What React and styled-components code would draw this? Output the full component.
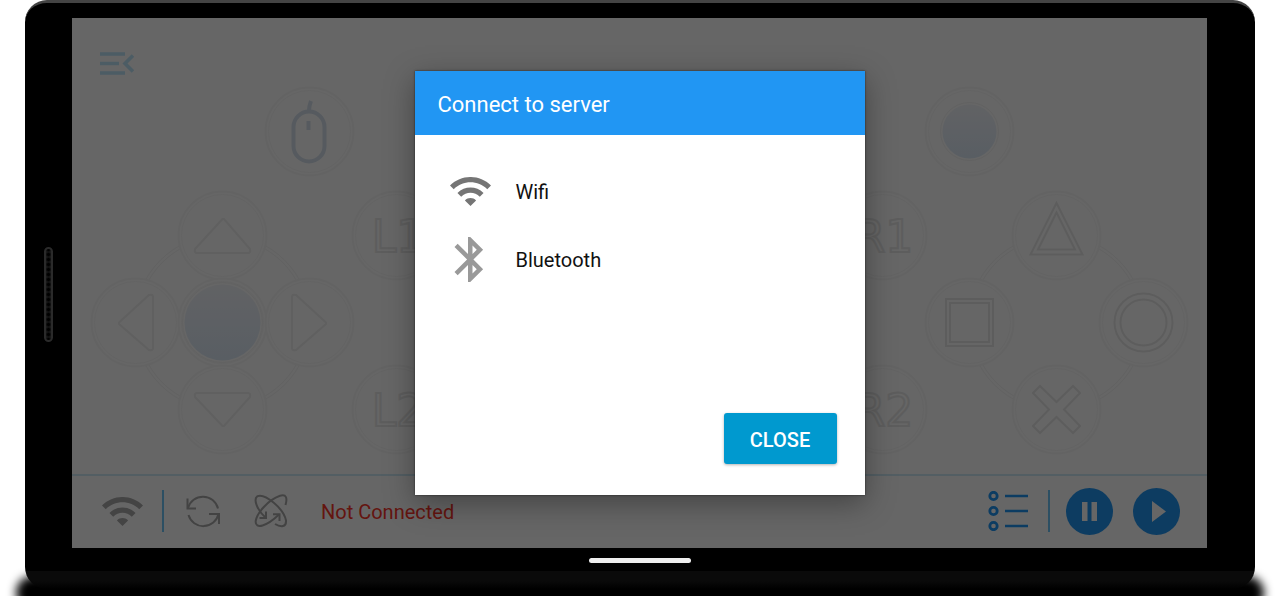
import React from "react";
import styled, { createGlobalStyle } from "styled-components";

const App = () => {
  return (
    <>
      <GlobalStyle />
      <Page>
        <Device>
          <Body>
            <Bezel>
              <SpeakerSlot>
                <Speaker />
              </SpeakerSlot>
              <Screen>
                <Gamepad />
                <StatusBar />
                <Scrim>
                  <ConnectDialog />
                </Scrim>
              </Screen>
            </Bezel>
            <NavBar>
              <HomeIndicator />
            </NavBar>
          </Body>
        </Device>
      </Page>
    </>
  );
};

export default App;

// ======== Gamepad ========

const PadButton = ({ col, row, label, children }) => (
  <Pad type="button" aria-label={label} $col={col} $row={row}>
    <Drawing viewBox="0 0 87 87">
      <circle cx="43.5" cy="43.5" r="44" fill="#fff" stroke="#f8f8f8" strokeWidth="2" />
      <circle cx="43.5" cy="43.5" r="41" fill="none" stroke="#f8f8f8" />
      {children}
    </Drawing>
  </Pad>
);

const PadRing = () => (
  <Ring viewBox="0 0 261 261" aria-hidden="true">
    <circle cx="130.5" cy="130.5" r="88" />
    <circle cx="130.5" cy="130.5" r="85" />
  </Ring>
);

const BlueBall = ({ id, r }) => (
  <>
    <defs>
      <linearGradient id={id} x1="0" y1="0" x2="0" y2="1">
        <stop offset="0" stopColor="#f3f5fa" />
        <stop offset="1" stopColor="#deebf8" />
      </linearGradient>
    </defs>
    <circle cx="43.5" cy="43.5" r={r + 2} fill="#fff" stroke="#f4f4f4" />
    <circle cx="43.5" cy="43.5" r={r} fill={`url(#${id})`} />
  </>
);

const Arrow = ({ d }) => <path d={d} fill="none" stroke="#f0f0f0" strokeWidth="2" />;

const Glyph = ({ children }) => (
  <g fill="none" stroke="#e9e9e9" strokeWidth="2">
    {children}
  </g>
);

const Shoulder = ({ text }) => (
  <text x="45" y="60" textAnchor="middle">
    {text}
  </text>
);

const Gamepad = () => (
  <PadArea>
    <MenuButton type="button" aria-label="Collapse menu">
      <svg width="34" height="24" viewBox="0 0 34 24" fill="none" stroke="#bfe6fb" strokeWidth="3.600">
        <path d="M0 2h25M0 11.500h19M0 21h25M33 3.500l-8 8 8 8" />
      </svg>
    </MenuButton>
    <Clusters>
      <Cluster>
        <PadRing />
        <PadButton col={3} row={1} label="Mouse">
          <g fill="none" stroke="#d6e2ee" strokeWidth="4">
            <rect x="27.500" y="23.500" width="31" height="50" rx="15.500" />
            <path d="M43 23q0-5 2-10M42.500 33v9" />
          </g>
        </PadButton>
        <PadButton col={2} row={2} label="Up">
          <Arrow d="M43.500 27 16 57q-1 4 2 4h51q3 0 2-4L45 27z" />
        </PadButton>
        <PadButton col={4} row={2} label="L1">
          <Shoulder text="L1" />
        </PadButton>
        <PadButton col={1} row={3} label="Left">
          <Arrow d="M27 43.500 57 16q4-1 4 2v51q0 3-4 2L27 45z" />
        </PadButton>
        <PadButton col={2} row={3} label="Centre">
          <BlueBall id="stickLeft" r={38} />
        </PadButton>
        <PadButton col={3} row={3} label="Right">
          <Arrow d="M60 43.500 30 16q-4-1-4 2v51q0 3 4 2L60 45z" />
        </PadButton>
        <PadButton col={2} row={4} label="Down">
          <Arrow d="M43.500 60 16 31q-1-4 2-4h51q3 0 2 4L45 60z" />
        </PadButton>
        <PadButton col={4} row={4} label="L2">
          <Shoulder text="L2" />
        </PadButton>
      </Cluster>
      <Cluster $right>
        <PadRing />
        <PadButton col={2} row={1} label="Stick">
          <BlueBall id="stickRight" r={27} />
        </PadButton>
        <PadButton col={1} row={2} label="R1">
          <Shoulder text="R1" />
        </PadButton>
        <PadButton col={3} row={2} label="Triangle">
          <Glyph>
            <path d="M43.500 11 17.500 62.500h52zM43.500 20.500 25 57.500h37z" />
          </Glyph>
        </PadButton>
        <PadButton col={2} row={3} label="Square">
          <Glyph>
            <path d="M20 20h47v47H20zM24 24h39v39H24z" />
          </Glyph>
        </PadButton>
        <PadButton col={4} row={3} label="Circle">
          <Glyph>
            <circle cx="43.500" cy="43.500" r="29" />
            <circle cx="43.500" cy="43.500" r="23" />
          </Glyph>
        </PadButton>
        <PadButton col={1} row={4} label="R2">
          <Shoulder text="R2" />
        </PadButton>
        <PadButton col={3} row={4} label="Cross">
          <Glyph>
            <path d="M27 20l16.500 16L60 20l7 7-16 16.500L67 60l-7 7-16.500-16L27 67l-7-7 16-16.500L20 27z" />
          </Glyph>
        </PadButton>
      </Cluster>
    </Clusters>
  </PadArea>
);

// ======== Status bar ========

const WifiIcon = ({ color }) => (
  <svg width="41" height="29" viewBox="1 4.450 22 15.560" fill={color} aria-hidden="true">
    <path d="M1 9l2 2c4.970-4.970 13.030-4.970 18 0l2-2C16.930 2.930 7.080 2.930 1 9zm8 8l3 3 3-3c-1.650-1.660-4.340-1.660-6 0zm-4-4l2 2c2.760-2.760 7.240-2.760 10 0l2-2C15.140 9.140 8.870 9.140 5 13z" />
  </svg>
);

const RotateIcon = () => (
  <svg width="36" height="36" viewBox="0 0 36 36" fill="none" stroke="#a8a8a8" strokeWidth="2" aria-hidden="true">
    <path d="M2 15A15.500 15.500 0 0 1 32 15.500M2.500 22A15.500 15.500 0 0 0 32.500 21" />
    <path d="M1.500 5.500v10H10M23 21h10v10" />
  </svg>
);

const GyroIcon = () => (
  <svg width="34" height="34" viewBox="0 0 34 34" fill="none" stroke="#a8a8a8" strokeWidth="2" aria-hidden="true">
    <path d="M31.500 11C33.500 4 32.500 0 26 1.800C14 6 3 19 1.700 27C1 36 13 32 25 20.500" />
    <path d="M11.500 23.500C3 16-1 5 3.500 2.200C11-1 30 15 32 26.500C32.500 33 27 33.500 21 30" />
    <path d="M5.500 24H12v-6.500M19 20.300h6.500V27" />
  </svg>
);

const ListIcon = () => (
  <svg width="40" height="40" viewBox="0 0 40 40" fill="none" stroke="#1e96f5" strokeWidth="2.800" aria-hidden="true">
    <circle cx="5.500" cy="5" r="3.700" />
    <circle cx="5.500" cy="20" r="3.700" />
    <circle cx="5.500" cy="35" r="3.700" />
    <path d="M17 5h23M17 20h23M17 35h23" strokeWidth="2.400" />
  </svg>
);

const PauseIcon = () => (
  <svg width="47" height="47" viewBox="0 0 47 47" aria-hidden="true">
    <circle cx="23.500" cy="23.500" r="23.500" fill="#2196f3" />
    <path d="M16 14h5.500v19H16zM25.500 14H31v19h-5.500z" fill="#fff" />
  </svg>
);

const PlayIcon = () => (
  <svg width="47" height="47" viewBox="0 0 47 47" aria-hidden="true">
    <circle cx="23.500" cy="23.500" r="23.500" fill="#2196f3" />
    <path d="M19 13v21l14-10.500z" fill="#fff" />
  </svg>
);

const StatusBar = () => (
  <Bar>
    <BarGroup $gap={19} $after={22}>
      <IconButton type="button" aria-label="Wifi">
        <WifiIcon color="#aaa" />
      </IconButton>
      <Divider />
    </BarGroup>
    <BarGroup $gap={32} $after={33}>
      <IconButton type="button" aria-label="Rotate">
        <RotateIcon />
      </IconButton>
      <IconButton type="button" aria-label="Gyroscope">
        <GyroIcon />
      </IconButton>
    </BarGroup>
    <Status>Not Connected</Status>
    <BarGroup $gap={20} $after={16} $end>
      <IconButton type="button" aria-label="List">
        <ListIcon />
      </IconButton>
      <Divider />
    </BarGroup>
    <BarGroup $gap={20}>
      <IconButton type="button" aria-label="Pause">
        <PauseIcon />
      </IconButton>
      <IconButton type="button" aria-label="Play">
        <PlayIcon />
      </IconButton>
    </BarGroup>
  </Bar>
);

// ======== Dialog ========

const BluetoothIcon = () => (
  <svg width="41" height="45" viewBox="3 2 18.220 20" fill="#999" aria-hidden="true">
    <path d="M17.710 7.710L12 2h-1v7.590L6.410 5 5 6.410 10.590 12 5 17.590 6.410 19 11 14.410V22h1l5.710-5.710-4.300-4.290 4.300-4.290zM13 5.830l1.880 1.880L13 9.590V5.830zm1.880 10.460L13 18.170v-3.760l1.880 1.880z" />
  </svg>
);

const ConnectDialog = () => (
  <Dialog role="dialog" aria-labelledby="dialog-title">
    <Title id="dialog-title">Connect to server</Title>
    <Options>
      <Option type="button">
        <WifiIcon color="#757575" />
        <OptionLabel>Wifi</OptionLabel>
      </Option>
      <Option type="button">
        <BluetoothIcon />
        <OptionLabel>Bluetooth</OptionLabel>
      </Option>
    </Options>
    <Actions>
      <CloseButton type="button">CLOSE</CloseButton>
    </Actions>
  </Dialog>
);

// ======== Styled Components ========

const GlobalStyle = createGlobalStyle`
  * {
    box-sizing: border-box;
  }

  body {
    margin: 0;
    background: #fff;
    font-family: Roboto, "Liberation Sans", sans-serif;
  }

  button {
    border: 0;
    padding: 0;
    background: none;
    font: inherit;
    color: inherit;
    cursor: pointer;
  }

  svg {
    display: block;
  }
`;

const Page = styled.div`
  padding: 0 25px 5px;
  overflow: hidden;
`;

const Device = styled.main`
  position: relative;
  z-index: 0;
  padding-bottom: 7px;
  clip-path: inset(0 -25px 0 -25px);

  /* ground shadow that spreads out under the lower corners */
  &::before {
    content: "";
    position: absolute;
    z-index: -1;
    left: -9px;
    right: -9px;
    bottom: -14px;
    height: 34px;
    border-radius: 20px;
    background: #000;
    filter: blur(5px);
  }
`;

const Body = styled.div`
  padding-bottom: 18px;
  border-top: 3px solid #444;
  border-radius: 22px;
  background: linear-gradient(#000 568px, #0a0a0a 568px, #0a0a0a 578px, #000);
`;

const Bezel = styled.div`
  display: grid;
  grid-template-columns: 47px 1fr 48px;
  padding-top: 15px;
`;

const SpeakerSlot = styled.div`
  display: flex;
  align-items: center;
  justify-content: center;
  padding-top: 22px;
`;

const Speaker = styled.div`
  width: 9px;
  height: 95px;
  border: 2px solid #2a2a2a;
  border-radius: 5px;
  background: radial-gradient(#000 1px, #1c1c1c 3px) center / 5px 5px;
`;

const Screen = styled.section`
  position: relative;
  display: flex;
  flex-direction: column;
  height: 530px;
  background: #fff;
`;

const NavBar = styled.div`
  display: flex;
  justify-content: center;
  padding-top: 10px;
  height: 23px;
`;

const HomeIndicator = styled.div`
  width: 102px;
  height: 5px;
  border-radius: 3px;
  background: #eee;
`;

const PadArea = styled.div`
  flex: 1;
  padding: 34px 20px 0;
`;

const MenuButton = styled.button`
  display: block;
  margin-left: 8px;
  height: 36px;

  svg {
    margin-bottom: 12px;
  }
`;

const Clusters = styled.div`
  display: flex;
  justify-content: space-between;
`;

const Cluster = styled.div`
  display: grid;
  grid-template-columns: repeat(4, 87px);
  grid-template-rows: 104px repeat(3, 87px);

  > svg {
    grid-column: ${({ $right }) => ($right ? "2 / 5" : "1 / 4")};
  }
`;

const Ring = styled.svg`
  grid-row: 2 / 5;
  width: 261px;
  height: 261px;
  fill: none;
  stroke: #f4f4f4;
`;

const Pad = styled.button`
  grid-column: ${({ $col }) => $col};
  grid-row: ${({ $row }) => $row};
  width: 87px;
  height: 87px;
`;

const Drawing = styled.svg`
  width: 87px;
  height: 87px;
  overflow: visible;

  text {
    fill: #fff;
    stroke: #e9e9e9;
    stroke-width: 2;
    font: 44px "DejaVu Sans", sans-serif;
  }
`;

const Bar = styled.footer`
  display: flex;
  align-items: center;
  height: 74px;
  padding: 0 27px 2px 30px;
  border-top: 2px solid #d0eaf8;
`;

const BarGroup = styled.div`
  display: flex;
  align-items: center;
  gap: ${({ $gap }) => $gap}px;
  margin-left: ${({ $end }) => ($end ? "auto" : "0")};
  margin-right: ${({ $after = 0 }) => $after}px;
`;

const IconButton = styled.button`
  flex: none;
`;

const Divider = styled.div`
  width: 2px;
  height: 42px;
  background: #6fc6f8;
`;

const Status = styled.span`
  padding-top: 2px;
  font-size: 20px;
  line-height: 24px;
  color: #f9362a;
`;

const Scrim = styled.div`
  position: absolute;
  inset: 0;
  display: flex;
  align-items: center;
  justify-content: center;
  background: rgba(0, 0, 0, 0.6);
`;

const Dialog = styled.div`
  display: flex;
  flex-direction: column;
  width: 450px;
  height: 424px;
  background: #fff;
  box-shadow:
    0 0 2px rgba(0, 0, 0, 0.6),
    0 8px 28px rgba(0, 0, 0, 0.35);
`;

const Title = styled.h1`
  margin: 0;
  padding: 4px 23px 0;
  background: #2196f3;
  color: #fff;
  font-size: 22px;
  font-weight: 400;
  line-height: 60px;
`;

const Options = styled.div`
  display: flex;
  flex: 1;
  flex-direction: column;
  padding: 22px 35px;
`;

const Option = styled.button`
  display: flex;
  align-items: center;
  gap: 25px;
  height: 68px;
  color: #111;
  font-size: 20px;
  text-align: left;
`;

const OptionLabel = styled.span`
  padding-top: 2px;
`;

const Actions = styled.div`
  display: flex;
  justify-content: flex-end;
  padding: 0 28px 31px;
`;

const CloseButton = styled.button`
  width: 113px;
  height: 51px;
  padding-top: 2px;
  border-radius: 3px;
  background: #0099cf;
  color: #fff;
  font-size: 20px;
  font-weight: 500;
  box-shadow: 0 1px 3px rgba(0, 0, 0, 0.3);
`;
